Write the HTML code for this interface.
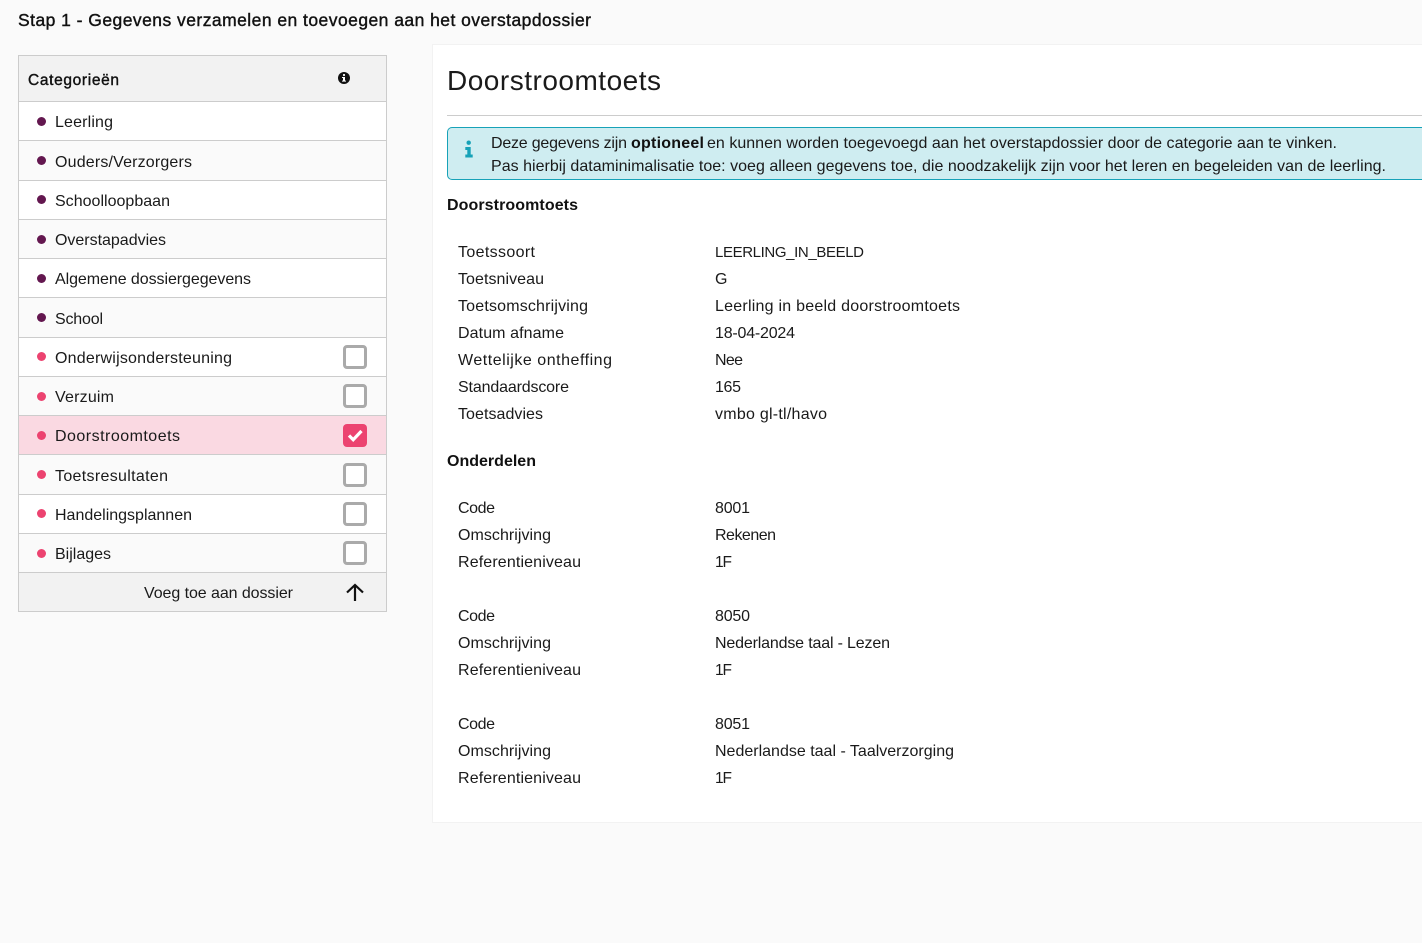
<!DOCTYPE html>
<html lang="nl">
<head>
<meta charset="utf-8">
<title>Stap 1 - Doorstroomtoets</title>
<style>
html,body{margin:0;padding:0;width:1422px;height:943px;overflow:hidden;background:#fafafa}
.b{position:absolute;box-sizing:border-box}
svg.t{position:absolute;left:0;top:0}
svg.t text{font-family:"Liberation Sans",sans-serif;font-size:16px;fill:#1a1a1a}
svg.t .m{font-weight:400;stroke:#111;stroke-width:.4px;fill:#111}
svg.t .s{font-weight:700;fill:#111}
.row{left:18px;width:369px;border-left:1px solid #ccc;border-right:1px solid #ccc;border-bottom:1px solid #ccc}
.dot{width:9px;height:9px;border-radius:50%;left:37px}
.p{background:#63174f}.r{background:#ec4370}
.cb{left:343px;width:24px;height:24px;border:3px solid #aaa;border-radius:4px;background:#fff}
</style>
</head>
<body>
<div class="b" style="left:432px;top:44px;width:990px;height:779px;background:#fff;border:1px solid #f2f2f2;border-right:0"></div>
<div class="b" style="left:447px;top:115px;width:975px;height:1px;background:#ccc"></div>
<div class="b" style="left:447px;top:127px;width:975px;height:53px;background:#cfedf1;border:1px solid #17a2b8;border-right:0;border-radius:5px 0 0 5px"></div>

<div class="b" style="left:18px;top:55px;width:369px;height:47px;background:#f2f2f2;border:1px solid #ccc"></div>
<div class="b row" style="top:102px;height:39px;background:#fff"></div>
<div class="b row" style="top:141px;height:40px;background:#fafafa"></div>
<div class="b row" style="top:181px;height:39px;background:#fff"></div>
<div class="b row" style="top:220px;height:39px;background:#fafafa"></div>
<div class="b row" style="top:259px;height:39px;background:#fff"></div>
<div class="b row" style="top:298px;height:40px;background:#fafafa"></div>
<div class="b row" style="top:338px;height:39px;background:#fff"></div>
<div class="b row" style="top:377px;height:39px;background:#fafafa"></div>
<div class="b row" style="top:416px;height:39px;background:#fad9e2"></div>
<div class="b row" style="top:455px;height:40px;background:#fafafa"></div>
<div class="b row" style="top:495px;height:39px;background:#fff"></div>
<div class="b row" style="top:534px;height:39px;background:#fafafa"></div>
<div class="b row" style="top:573px;height:39px;background:#f2f2f2"></div>

<div class="b dot p" style="top:117px"></div>
<div class="b dot p" style="top:156px"></div>
<div class="b dot p" style="top:195px"></div>
<div class="b dot p" style="top:235px"></div>
<div class="b dot p" style="top:274px"></div>
<div class="b dot p" style="top:313px"></div>
<div class="b dot r" style="top:352px"></div>
<div class="b dot r" style="top:392px"></div>
<div class="b dot r" style="top:431px"></div>
<div class="b dot r" style="top:470px"></div>
<div class="b dot r" style="top:509px"></div>
<div class="b dot r" style="top:549px"></div>

<div class="b cb" style="top:345px"></div>
<div class="b cb" style="top:384px"></div>
<div class="b" style="left:343px;top:424px;width:24px;height:23px;background:#ec4370;border-radius:4px"></div>
<div class="b cb" style="top:463px"></div>
<div class="b cb" style="top:502px"></div>
<div class="b cb" style="top:541px"></div>

<svg class="t" width="1422" height="943" viewBox="0 0 1422 943">
  <!-- icons -->
  <circle cx="344" cy="78" r="6" fill="#111"/>
  <rect x="343" y="77" width="2" height="4.400" fill="#fff"/>
  <rect x="342" y="77" width="2" height="1" fill="#fff"/>
  <rect x="342" y="80.600" width="4" height="1" fill="#fff"/>
  <circle cx="344" cy="75" r="1.100" fill="#fff"/>
  <path d="M349 435.500l4.200 4.200 8.300-8.700" fill="none" stroke="#fff" stroke-width="3.200"/>
  <path d="M355 601V586M347 592.500L355 585L363 592.500" fill="none" stroke="#111" stroke-width="2.200"/>
  <circle cx="468.700" cy="142.700" r="2.200" fill="#17a2b8"/>
  <path d="M465.300 147h5.400v7.500h2v3h-7.400v-3h2v-4.500h-2z" fill="#17a2b8"/>

  <text class="m" x="18" y="26" textLength="573" style="font-size:17.500px">Stap 1 - Gegevens verzamelen en toevoegen aan het overstapdossier</text>
  <text class="m" x="28" y="85" textLength="91" style="font-size:15.500px">Categorieën</text>

  <text x="55" y="127" textLength="58">Leerling</text>
  <text x="55" y="167" textLength="137">Ouders/Verzorgers</text>
  <text x="55" y="206" textLength="115">Schoolloopbaan</text>
  <text x="55" y="245" textLength="111">Overstapadvies</text>
  <text x="55" y="284" textLength="196">Algemene dossiergegevens</text>
  <text x="55" y="324" textLength="48">School</text>
  <text x="55" y="363" textLength="177">Onderwijsondersteuning</text>
  <text x="55" y="402" textLength="59">Verzuim</text>
  <text x="55" y="441" textLength="125">Doorstroomtoets</text>
  <text x="55" y="481" textLength="113">Toetsresultaten</text>
  <text x="55" y="520" textLength="137">Handelingsplannen</text>
  <text x="55" y="559" textLength="56">Bijlages</text>
  <text x="144" y="598" textLength="149">Voeg toe aan dossier</text>

  <text x="447" y="90" textLength="214" style="font-size:28px">Doorstroomtoets</text>

  <text x="491" y="148" textLength="136">Deze gegevens zijn</text>
  <text class="s" x="631" y="148" textLength="73">optioneel</text>
  <text x="707" y="148" textLength="630">en kunnen worden toegevoegd aan het overstapdossier door de categorie aan te vinken.</text>
  <text x="491" y="171" textLength="895">Pas hierbij dataminimalisatie toe: voeg alleen gegevens toe, die noodzakelijk zijn voor het leren en begeleiden van de leerling.</text>

  <text class="s" x="447" y="210" textLength="131">Doorstroomtoets</text>

  <text x="458" y="257" textLength="77">Toetssoort</text>
  <text x="715" y="257" textLength="149" style="font-size:15px">LEERLING_IN_BEELD</text>
  <text x="458" y="284" textLength="86">Toetsniveau</text>
  <text x="715" y="284" textLength="10">G</text>
  <text x="458" y="311" textLength="130">Toetsomschrijving</text>
  <text x="715" y="311" textLength="245">Leerling in beeld doorstroomtoets</text>
  <text x="458" y="338" textLength="106">Datum afname</text>
  <text x="715" y="338" textLength="80">18-04-2024</text>
  <text x="458" y="365" textLength="154">Wettelijke ontheffing</text>
  <text x="715" y="365" textLength="28">Nee</text>
  <text x="458" y="392" textLength="111">Standaardscore</text>
  <text x="715" y="392" textLength="26">165</text>
  <text x="458" y="419" textLength="85">Toetsadvies</text>
  <text x="715" y="419" textLength="112">vmbo gl-tl/havo</text>

  <text class="s" x="447" y="466" textLength="89">Onderdelen</text>

  <text x="458" y="513" textLength="37">Code</text>
  <text x="715" y="513" textLength="35">8001</text>
  <text x="458" y="540" textLength="93">Omschrijving</text>
  <text x="715" y="540" textLength="61">Rekenen</text>
  <text x="458" y="567" textLength="123">Referentieniveau</text>
  <text x="715" y="567" textLength="17" style="font-size:15.500px">1F</text>

  <text x="458" y="621" textLength="37">Code</text>
  <text x="715" y="621" textLength="35">8050</text>
  <text x="458" y="648" textLength="93">Omschrijving</text>
  <text x="715" y="648" textLength="175">Nederlandse taal - Lezen</text>
  <text x="458" y="675" textLength="123">Referentieniveau</text>
  <text x="715" y="675" textLength="17" style="font-size:15.500px">1F</text>

  <text x="458" y="729" textLength="37">Code</text>
  <text x="715" y="729" textLength="35">8051</text>
  <text x="458" y="756" textLength="93">Omschrijving</text>
  <text x="715" y="756" textLength="239">Nederlandse taal - Taalverzorging</text>
  <text x="458" y="783" textLength="123">Referentieniveau</text>
  <text x="715" y="783" textLength="17" style="font-size:15.500px">1F</text>
</svg>
</body>
</html>
